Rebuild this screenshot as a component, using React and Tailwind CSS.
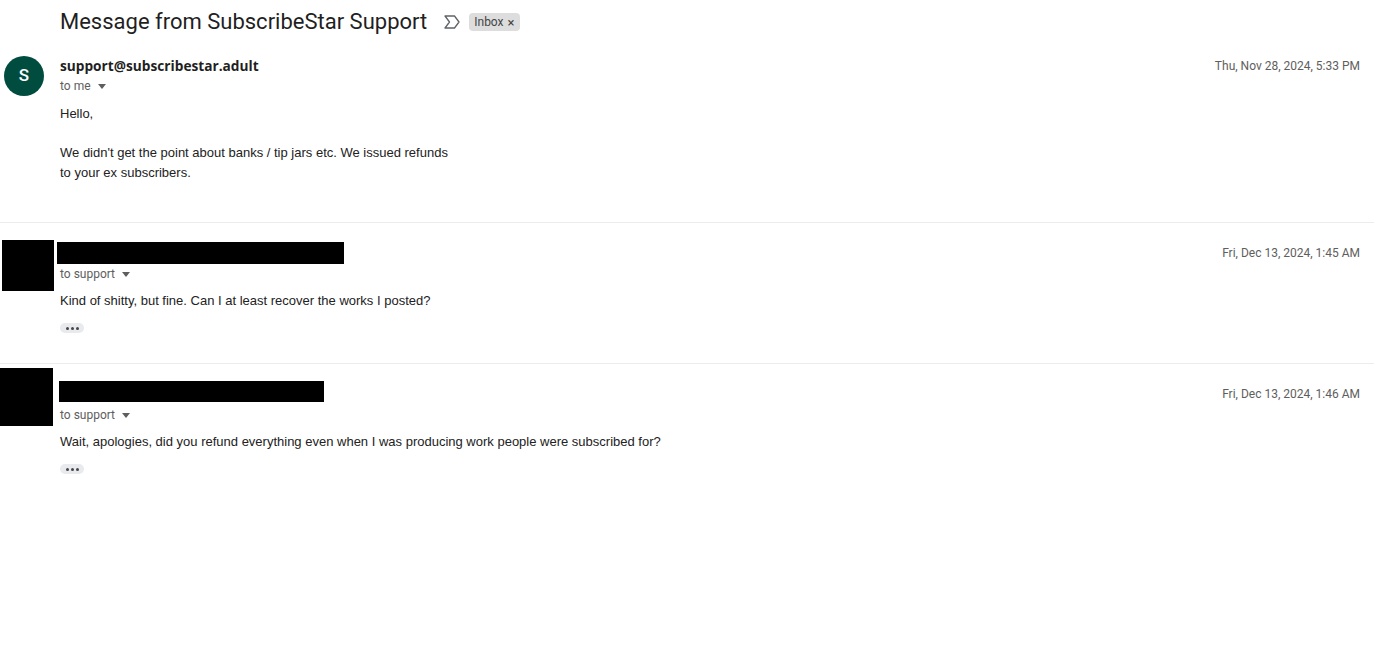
import React from 'react';

function Caret() {
    return (
        <svg width="8" height="5" viewBox="0 0 8 5" className="ml-[7px] mt-[1px]">
            <path d="M0 0h8L4 5z" fill="#5e5e5e" />
        </svg>
    );
}

function Dots() {
    return (
        <div className="mt-[12px] w-[24px] h-[10px] rounded-full bg-[#e8eaed] flex items-center justify-center gap-[2px]">
            <span className="w-[3px] h-[3px] rounded-full bg-[#444746]" />
            <span className="w-[3px] h-[3px] rounded-full bg-[#444746]" />
            <span className="w-[3px] h-[3px] rounded-full bg-[#444746]" />
        </div>
    );
}

function Recipient({ to }) {
    return (
        <div className="flex items-center h-[20px] text-[12px] text-[#5e5e5e]">
            <span>{to}</span>
            <Caret />
        </div>
    );
}

const bodyFont = { fontFamily: '"Liberation Sans", Arial, sans-serif' };

export default function App() {
    return (
        <div className="w-[1374px] h-[648px] bg-white overflow-hidden" style={{ fontFamily: 'Roboto, "Liberation Sans", sans-serif' }}>
            {/* subject line */}
            <div className="flex items-center pl-[60px] pt-[7px] h-[36px]">
                <h1 className="text-[22px] leading-[28px] text-[#1f1f1f] font-normal">Message from SubscribeStar Support</h1>
                <svg width="16" height="14" viewBox="0 0 16 14" className="ml-[17px] mt-[1px]" fill="none">
                    <path d="M1 1h9.5l4.5 6-4.5 6H1l4.5-6z" stroke="#5f6368" strokeWidth="1.3" strokeLinejoin="round" />
                </svg>
                <div className="ml-[9px] mt-[1px] h-[18px] px-[5px] rounded-[4px] bg-[#dddddd] flex items-center text-[12px] text-[#444444]">
                    <span>Inbox</span>
                    <span className="ml-[4px] text-[13px] leading-none">×</span>
                </div>
            </div>

            {/* message 1 */}
            <div className="flex pt-[20px] h-[187px] border-b border-[#ececec]">
                <div className="w-[60px] pl-[4px]">
                    <div className="w-[40px] h-[40px] rounded-full bg-[#004d40] flex items-center justify-center text-white text-[17px] font-medium">S</div>
                </div>
                <div className="flex-1 pr-[14px]">
                    <div className="flex items-start justify-between h-[20px]">
                        <span className="text-[13.7px] leading-[20px] font-bold text-[#1f1f1f]" style={{ fontFamily: '"Open Sans", Roboto, sans-serif' }}>support@subscribestar.adult</span>
                        <span className="text-[12px] leading-[20px] text-[#5e5e5e]">Thu, Nov 28, 2024, 5:33 PM</span>
                    </div>
                    <Recipient to="to me" />
                    <div className="mt-[8px] text-[13px] leading-[20px] text-[#222222]" style={bodyFont}>
                        <p>Hello,</p>
                        <p className="mt-[19px]">We didn't get the point about banks / tip jars etc. We issued refunds<br />to your ex subscribers.</p>
                    </div>
                </div>
            </div>

            {/* message 2 */}
            <div className="flex pt-[17px] h-[141px] border-b border-[#ececec]">
                <div className="w-[57px] pl-[2px]">
                    <div className="w-[52px] h-[51px] bg-black" />
                </div>
                <div className="flex-1 pr-[14px]">
                    <div className="flex items-start justify-between">
                        <div className="mt-[2px] w-[287px] h-[22px] bg-black" />
                        <span className="text-[12px] leading-[20px] mt-[3px] text-[#5e5e5e]">Fri, Dec 13, 2024, 1:45 AM</span>
                    </div>
                    <div className="pl-[3px]">
                        <Recipient to="to support" />
                        <p className="mt-[7px] text-[13px] leading-[20px] text-[#222222]" style={bodyFont}>
                            Kind of shitty, but fine. Can I at least recover the works I posted?
                        </p>
                        <Dots />
                    </div>
                </div>
            </div>

            {/* message 3 */}
            <div className="flex pt-[4px]">
                <div className="w-[59px]">
                    <div className="w-[53px] h-[58px] bg-black" />
                </div>
                <div className="flex-1 pr-[14px]">
                    <div className="flex items-start justify-between">
                        <div className="mt-[13px] w-[265px] h-[21px] bg-black" />
                        <span className="text-[12px] leading-[20px] mt-[16px] text-[#5e5e5e]">Fri, Dec 13, 2024, 1:46 AM</span>
                    </div>
                    <div className="pl-[1px] mt-[1px]">
                        <Recipient to="to support" />
                        <p className="mt-[7px] text-[13px] leading-[20px] text-[#222222]" style={bodyFont}>
                            Wait, apologies, did you refund everything even when I was producing work people were subscribed for?
                        </p>
                        <Dots />
                    </div>
                </div>
            </div>
        </div>
    );
}
